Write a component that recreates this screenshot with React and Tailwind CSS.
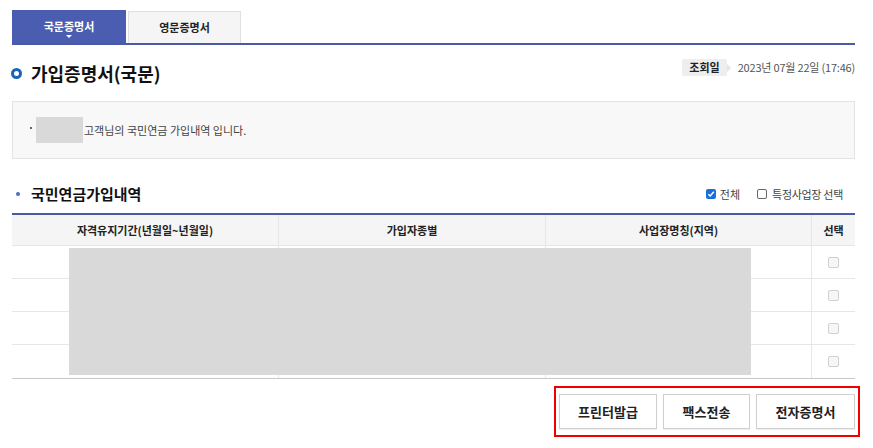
const font = { fontFamily: '"Noto Sans CJK KR", "Noto Sans", sans-serif' };

function Box({ checked }) {
  if (checked) {
    return (
      <span className="block shrink-0 w-[10px] h-[10px] rounded-[2px] bg-[#1a6fdc] flex items-center justify-center">
        <svg width="8" height="8" viewBox="0 0 8 8">
          <path d="M1.3 4.2 L3.2 6 L6.8 1.8" stroke="#fff" strokeWidth="1.4" fill="none" />
        </svg>
      </span>
    );
  }
  return <span className="block shrink-0 w-[10px] h-[10px] rounded-[2px] border border-[#666] bg-white" />;
}

const cols = [
  { label: '자격유지기간(년월일~년월일)', w: 'w-[267px]' },
  { label: '가입자종별', w: 'w-[267px]' },
  { label: '사업장명칭(지역)', w: 'w-[266px]' },
  { label: '선택', w: 'flex-1' },
];

export default function App() {
  return (
    <div className="w-[873px] h-[448px] bg-white pl-[12px] pr-[18px] overflow-hidden text-[#333]" style={font}>
      {/* tabs */}
      <div className="pt-[10px] flex border-b-2 border-[#4b5aa6]">
        <div className="w-[114px] h-[33px] bg-[#4b5db1] text-white text-[11px] font-bold flex flex-col items-center justify-center relative">
          <span className="leading-[14px] -mt-[2px]">국문증명서</span>
          <svg className="absolute bottom-[5px] left-1/2 -translate-x-1/2" width="6" height="3" viewBox="0 0 6 3">
            <path d="M0 0 L6 0 L3 3 Z" fill="#fff" />
          </svg>
        </div>
        <div className="ml-[2px] w-[113px] h-[32px] mt-[1px] bg-[#f5f5f5] border border-b-0 border-[#e0e0e0] text-[11px] font-bold text-[#222] flex items-center justify-center">
          영문증명서
        </div>
      </div>

      {/* title */}
      <div className="mt-[14px] flex justify-between items-start">
        <div className="flex items-center h-[28px]">
          <span className="block shrink-0 w-[11px] h-[11px] rounded-full border-[3px] border-[#1a62b8] -ml-[1px]" />
          <h1 className="ml-[9px] text-[18px] font-bold text-[#111] leading-[28px]">가입증명서(국문)</h1>
        </div>
        <div className="flex items-center h-[17px]">
          <span className="h-[17px] px-[7px] bg-[#eeeeee] rounded-[2px] text-[11px] font-bold text-[#222] flex items-center">조회일</span>
          <span className="block w-0 h-0 border-t-[4px] border-b-[4px] border-l-[4px] border-t-transparent border-b-transparent border-l-[#e4e4e4]" />
          <span className="ml-[7px] text-[11px] text-[#555] tracking-[-0.2px]">2023년 07월 22일 (17:46)</span>
        </div>
      </div>

      {/* info */}
      <div className="mt-[14px] h-[58px] bg-[#f8f8f8] border border-[#e3e3e3] flex items-center pl-[17px]">
        <span className="block shrink-0 w-[2px] h-[2px] bg-[#666] -mt-[4px]" />
        <span className="block shrink-0 ml-[4px] w-[47px] h-[26px] bg-[#d9d9d9]" />
        <span className="ml-[1px] text-[11px] text-[#444]">고객님의 국민연금 가입내역 입니다.</span>
      </div>

      {/* section */}
      <div className="mt-[25px] flex justify-between items-center h-[20px]">
        <div className="flex items-center">
          <span className="block shrink-0 ml-[4px] w-[4px] h-[4px] rounded-full bg-[#4b6cc2]" />
          <h2 className="ml-[11px] text-[15px] font-bold text-[#111]">국민연금가입내역</h2>
        </div>
        <div className="flex items-center text-[11px] text-[#444] mr-[12px]">
          <Box checked />
          <span className="ml-[4px]">전체</span>
          <span className="ml-[17px]"><Box /></span>
          <span className="ml-[5px] tracking-[-0.3px]">특정사업장 선택</span>
        </div>
      </div>

      {/* table */}
      <div className="mt-[9px] relative border-t-2 border-[#4b5aa6] border-b border-b-[#c8c8c8]">
        <div className="flex h-[31px] bg-[#f5f5f5] border-b border-[#e6e6e6]">
          {cols.map((c, i) => (
            <div
              key={c.label}
              className={`${c.w} flex items-center justify-center text-[11px] font-bold text-[#222] ${i < 3 ? 'border-r border-[#e6e6e6]' : ''}`}
            >
              {c.label}
            </div>
          ))}
        </div>
        {[0, 1, 2, 3].map((r) => (
          <div key={r} className={`flex h-[33px] ${r < 3 ? 'border-b border-[#e6e6e6]' : ''}`}>
            <div className="w-[267px] border-r border-[#e6e6e6]" />
            <div className="w-[267px] border-r border-[#e6e6e6]" />
            <div className="w-[266px] border-r border-[#e6e6e6]" />
            <div className="flex-1 flex items-center justify-center">
              <span className="block w-[11px] h-[11px] rounded-[2px] border border-[#d0d0d0] bg-[#f6f6f6]" />
            </div>
          </div>
        ))}
        <div className="absolute left-[57px] top-[33px] w-[682px] h-[127px] bg-[#d9d9d9]" />
      </div>

      {/* buttons */}
      <div className="mt-[7px] flex justify-end -mr-[5px]">
        <div className="border-2 border-[#ee0000] flex gap-[6px] pl-[3px] pr-[3px] py-[6px]">
          <button className="w-[98px] h-[35px] bg-white border border-[#cfcfcf] text-[13px] font-bold text-[#222] shadow-[0_1px_1px_rgba(0,0,0,0.06)]">프린터발급</button>
          <button className="w-[87px] h-[35px] bg-white border border-[#cfcfcf] text-[13px] font-bold text-[#222] shadow-[0_1px_1px_rgba(0,0,0,0.06)]">팩스전송</button>
          <button className="w-[99px] h-[35px] bg-white border border-[#cfcfcf] text-[13px] font-bold text-[#222] shadow-[0_1px_1px_rgba(0,0,0,0.06)]">전자증명서</button>
        </div>
      </div>
    </div>
  );
}
